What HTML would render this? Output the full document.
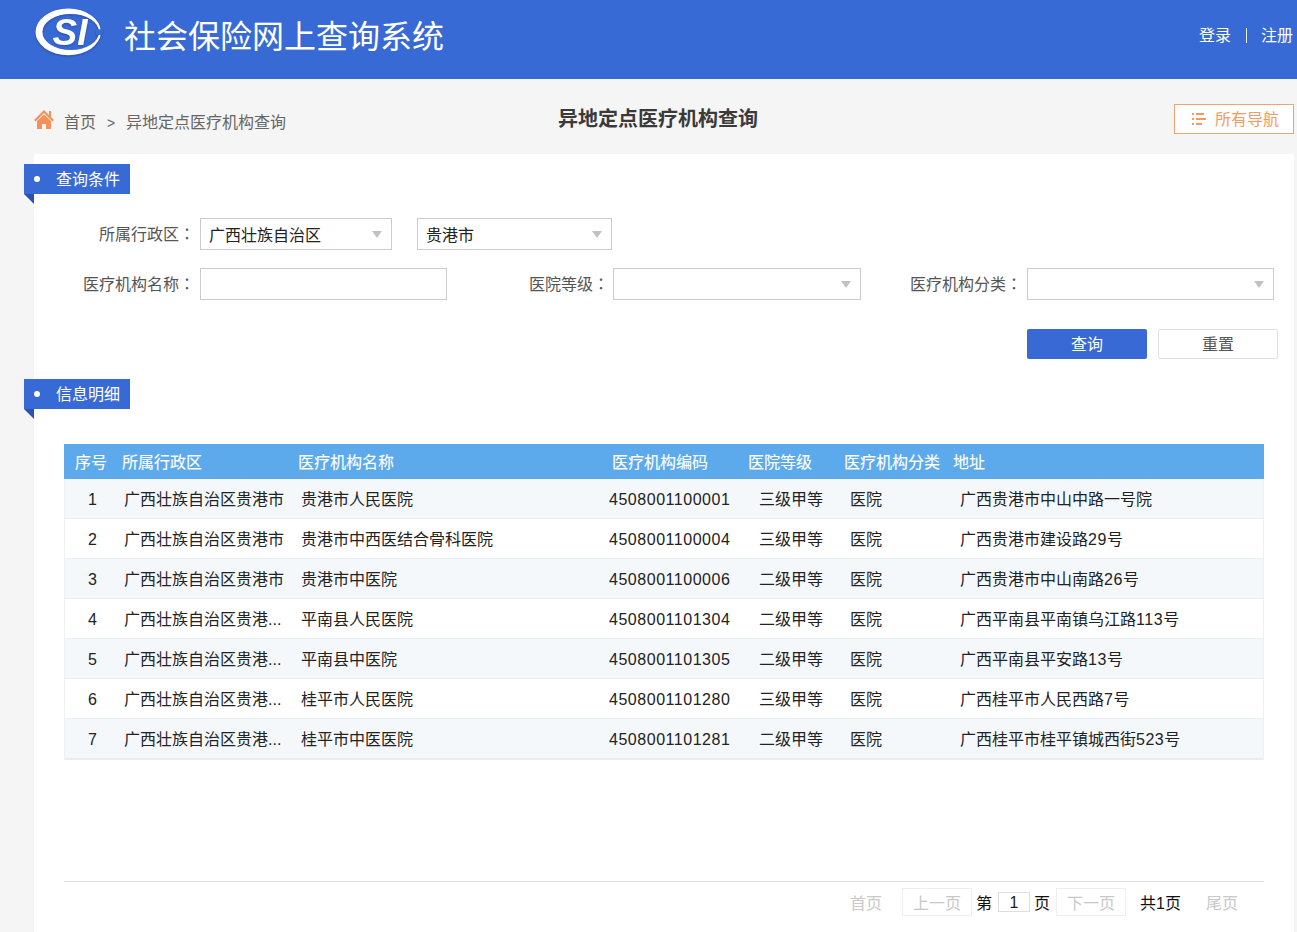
<!DOCTYPE html>
<html lang="zh-CN">
<head>
<meta charset="utf-8">
<title>异地定点医疗机构查询</title>
<style>
*{box-sizing:border-box;margin:0;padding:0}
html,body{width:1297px;height:932px;overflow:hidden}
body{background:#f5f5f5;font-family:"Liberation Sans","Noto Sans CJK SC",sans-serif;font-size:16px;color:#333;position:relative}
.abs{position:absolute;white-space:nowrap}
#hdr{position:absolute;left:0;top:0;width:1297px;height:79px;background:#386ad5}
#ttl{left:124px;top:14px;font-size:32px;line-height:46px;color:#fff}
#login{left:1199px;top:24px;font-size:16px;line-height:24px;color:#fff}
#login .sep{display:inline-block;width:30px;height:15px;position:relative;top:2px;font-size:0;overflow:hidden;color:transparent}
#login .sep:after{content:"";position:absolute;left:15px;top:0;width:1px;height:15px;background:#e8eefb}
#bc{left:64px;top:111px;line-height:24px;color:#666}
#bc .gt{display:inline-block;width:30px;text-align:center;font-size:14px}
#pt{left:558px;top:103.5px;font-size:20px;font-weight:bold;line-height:30px;color:#3a3a3a}
#nav{left:1174px;top:104px;width:120px;height:30px;border:1px solid #f0a475;background:#fff;color:#f39a63;line-height:30px;padding-left:40px}
#panel{position:absolute;left:34px;top:154px;width:1260px;height:778px;background:#fff}
.tag{position:absolute;left:24px;width:106px;height:30px;background:#386ad5;color:#fff;line-height:32px;padding-left:32px}
.tag:before{content:"";position:absolute;left:10px;top:12px;width:6px;height:6px;border-radius:50%;background:#fff}
.tag:after{content:"";position:absolute;left:0;top:30px;border-style:solid;border-width:0 10px 10px 0;border-color:transparent #2a52b0 transparent transparent}
.lbl{color:#555;line-height:24px;text-align:right}
.lbl i{font-style:normal;margin-left:4px;margin-right:-4px;position:relative;top:-1px}
.inp{position:absolute;height:32px;border:1px solid #ccc;background:#fff;line-height:34px;padding-left:8px;color:#222}
.inp.sel:after{content:"";position:absolute;right:9px;top:12px;border-style:solid;border-width:7px 5px 0 5px;border-color:#c2c2c2 transparent transparent transparent}
.btn{position:absolute;top:329px;width:120px;height:30px;line-height:32px;text-align:center;border-radius:2px}
#tbl{position:absolute;left:64px;top:444px;width:1200px;border-bottom:1px solid #e9eef2}
#tbl .th{height:35px;background:#5caaec;color:#fff;line-height:37px;-webkit-text-stroke:0.12px #fff;position:relative}
#tbl .tr{height:40px;line-height:41px;position:relative;border-bottom:1px solid #e9eef2;border-left:1px solid #eef1f4;border-right:1px solid #eef1f4;color:#222}
#tbl .tr.odd{background:#f4f8fb}
#tbl .tr.even{background:#fff}
#tbl span{position:absolute;top:0;white-space:nowrap}
.num{letter-spacing:0.53px}
#pgline{position:absolute;left:64px;top:881px;width:1200px;height:1px;background:#ddd}
.pg{line-height:24px;top:892px;color:#c8c8c8}
.pgb{position:absolute;top:888px;height:28px;border:1px solid #eee;color:#c8c8c8;line-height:30px;text-align:center}
</style>
</head>
<body>
<div id="hdr">
<svg class="abs" style="left:30px;top:4px;filter:drop-shadow(0.5px 1.5px 1px rgba(25,50,130,0.55))" width="80" height="60" viewBox="30 4 80 60">
<path fill-rule="evenodd" fill="#fff" d="M35.5 31.9a32.7 23.3 0 1 0 65.4 0a32.7 23.3 0 1 0 -65.4 0Z M42.4 32a28.3 18 0 1 0 56.6 0a28.3 18 0 1 0 -56.6 0Z"/>
<rect x="96" y="29.3" width="6" height="5.6" fill="#386ad5"/>
<text x="52.5" y="45.2" font-family="Liberation Sans, sans-serif" font-size="37.5" font-weight="bold" font-style="italic" fill="#fff" textLength="35" lengthAdjust="spacingAndGlyphs">SI</text>
</svg>
<div id="ttl" class="abs">社会保险网上查询系统</div>
<div id="login" class="abs">登录<span class="sep">|</span>注册</div>
</div>

<svg class="abs" style="left:33px;top:108px" width="22" height="22" viewBox="0 0 22 22">
<path d="M1 12 L11 2 L16 7 L16 3 L18 3 L18 9 L21 12 L19.5 13.5 L11 5 L2.5 13.5 Z" fill="#f5905a"/>
<path d="M4 13 L11 6.5 L18 13 L18 21 L13 21 L13 16 L9 16 L9 21 L4 21 Z" fill="#f5905a"/>
</svg>
<div id="bc" class="abs">首页<span class="gt">&gt;</span>异地定点医疗机构查询</div>
<div id="pt" class="abs">异地定点医疗机构查询</div>
<div id="nav" class="abs">所有导航
<svg class="abs" style="left:17px;top:7px" width="16" height="14" viewBox="0 0 16 14"><g fill="#f39a63"><rect x="0" y="1" width="2" height="2"/><rect x="4" y="1" width="8" height="2"/><rect x="0" y="6" width="2" height="2"/><rect x="4" y="6" width="10" height="2"/><rect x="0" y="11" width="2" height="2"/><rect x="4" y="11" width="6" height="2"/></g></svg>
</div>

<div id="panel"></div>

<div class="tag" style="top:164px">查询条件</div>
<div class="abs lbl" style="left:60px;width:135px;top:223px">所属行政区<i>：</i></div>
<div class="inp sel" style="left:200px;top:218px;width:192px">广西壮族自治区</div>
<div class="inp sel" style="left:417px;top:218px;width:195px">贵港市</div>

<div class="abs lbl" style="left:60px;width:135px;top:273px">医疗机构名称<i>：</i></div>
<div class="inp" style="left:200px;top:268px;width:247px"></div>
<div class="abs lbl" style="left:480px;width:129px;top:273px">医院等级<i>：</i></div>
<div class="inp sel" style="left:613px;top:268px;width:248px"></div>
<div class="abs lbl" style="left:880px;width:142px;top:273px">医疗机构分类<i>：</i></div>
<div class="inp sel" style="left:1027px;top:268px;width:247px"></div>

<div class="btn" style="left:1027px;background:#3869d4;color:#fff">查询</div>
<div class="btn" style="left:1158px;background:#fff;color:#555;border:1px solid #e2e2e2;line-height:30px">重置</div>

<div class="tag" style="top:379px">信息明细</div>

<div id="tbl">
<div class="th"><span style="left:11px">序号</span><span style="left:58px">所属行政区</span><span style="left:234px">医疗机构名称</span><span style="left:548px">医疗机构编码</span><span style="left:684px">医院等级</span><span style="left:780px">医疗机构分类</span><span style="left:889px">地址</span></div>
<div class="tr odd"><span style="left:23px">1</span><span style="left:59px">广西壮族自治区贵港市</span><span style="left:236px">贵港市人民医院</span><span class="num" style="left:544px">4508001100001</span><span style="left:694px">三级甲等</span><span style="left:785px">医院</span><span style="left:895px">广西贵港市中山中路一号院</span></div>
<div class="tr even"><span style="left:23px">2</span><span style="left:59px">广西壮族自治区贵港市</span><span style="left:236px">贵港市中西医结合骨科医院</span><span class="num" style="left:544px">4508001100004</span><span style="left:694px">三级甲等</span><span style="left:785px">医院</span><span style="left:895px">广西贵港市建设路<span class="num" style="position:static">29</span>号</span></div>
<div class="tr odd"><span style="left:23px">3</span><span style="left:59px">广西壮族自治区贵港市</span><span style="left:236px">贵港市中医院</span><span class="num" style="left:544px">4508001100006</span><span style="left:694px">二级甲等</span><span style="left:785px">医院</span><span style="left:895px">广西贵港市中山南路<span class="num" style="position:static">26</span>号</span></div>
<div class="tr even"><span style="left:23px">4</span><span style="left:59px">广西壮族自治区贵港...</span><span style="left:236px">平南县人民医院</span><span class="num" style="left:544px">4508001101304</span><span style="left:694px">二级甲等</span><span style="left:785px">医院</span><span style="left:895px">广西平南县平南镇乌江路<span class="num" style="position:static">113</span>号</span></div>
<div class="tr odd"><span style="left:23px">5</span><span style="left:59px">广西壮族自治区贵港...</span><span style="left:236px">平南县中医院</span><span class="num" style="left:544px">4508001101305</span><span style="left:694px">二级甲等</span><span style="left:785px">医院</span><span style="left:895px">广西平南县平安路<span class="num" style="position:static">13</span>号</span></div>
<div class="tr even"><span style="left:23px">6</span><span style="left:59px">广西壮族自治区贵港...</span><span style="left:236px">桂平市人民医院</span><span class="num" style="left:544px">4508001101280</span><span style="left:694px">三级甲等</span><span style="left:785px">医院</span><span style="left:895px">广西桂平市人民西路<span class="num" style="position:static">7</span>号</span></div>
<div class="tr odd"><span style="left:23px">7</span><span style="left:59px">广西壮族自治区贵港...</span><span style="left:236px">桂平市中医医院</span><span class="num" style="left:544px">4508001101281</span><span style="left:694px">二级甲等</span><span style="left:785px">医院</span><span style="left:895px">广西桂平市桂平镇城西街<span class="num" style="position:static">523</span>号</span></div>
</div>

<div id="pgline"></div>
<div class="abs pg" style="left:850px">首页</div>
<div class="pgb" style="left:902px;width:70px">上一页</div>
<div class="abs pg" style="left:976px;color:#111">第</div>
<div class="pgb" style="left:998px;top:892px;width:32px;height:20px;line-height:20px;color:#222;border-color:#ddd">1</div>
<div class="abs pg" style="left:1034px;color:#111">页</div>
<div class="pgb" style="left:1056px;width:70px">下一页</div>
<div class="abs pg" style="left:1140px;color:#111">共1页</div>
<div class="abs pg" style="left:1206px">尾页</div>
</body>
</html>
